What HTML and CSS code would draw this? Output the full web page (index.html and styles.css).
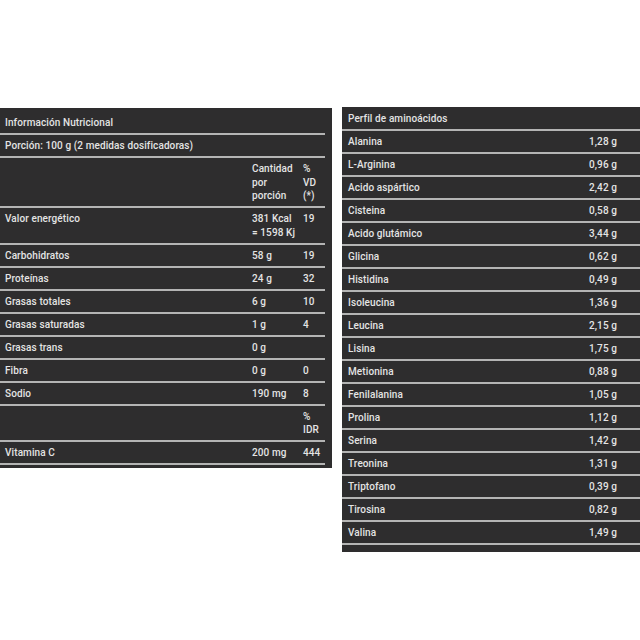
FILE: index.html
```html
<!DOCTYPE html>
<html lang="es">
<head>
<meta charset="utf-8">
<link rel="stylesheet" href="styles.css">
</head>
<body>
<div class="page">
  <section class="panel panel-left">
    <div class="table">
      <div class="row full">Información Nutricional</div>
      <div class="row full">Porción: 100 g (2 medidas dosificadoras)</div>
      <div class="row n3"><span></span><span>Cantidad<br>por<br>porción</span><span>%<br>VD<br>(*)</span></div>
      <div class="row n3"><span>Valor energético</span><span>381 Kcal<br>= 1598 Kj</span><span>19</span></div>
      <div class="row n3"><span>Carbohidratos</span><span>58 g</span><span>19</span></div>
      <div class="row n3"><span>Proteínas</span><span>24 g</span><span>32</span></div>
      <div class="row n3"><span>Grasas totales</span><span>6 g</span><span>10</span></div>
      <div class="row n3"><span>Grasas saturadas</span><span>1 g</span><span>4</span></div>
      <div class="row n3"><span>Grasas trans</span><span>0 g</span><span></span></div>
      <div class="row n3"><span>Fibra</span><span>0 g</span><span>0</span></div>
      <div class="row n3"><span>Sodio</span><span>190 mg</span><span>8</span></div>
      <div class="row n3"><span></span><span></span><span>%<br>IDR</span></div>
      <div class="row n3"><span>Vitamina C</span><span>200 mg</span><span>444</span></div>
    </div>
  </section>
  <section class="panel panel-right">
    <div class="row full">Perfil de aminoácidos</div>
    <div class="row n2"><span>Alanina</span><span>1,28 g</span></div>
    <div class="row n2"><span>L-Arginina</span><span>0,96 g</span></div>
    <div class="row n2"><span>Acido aspártico</span><span>2,42 g</span></div>
    <div class="row n2"><span>Cisteina</span><span>0,58 g</span></div>
    <div class="row n2"><span>Acido glutámico</span><span>3,44 g</span></div>
    <div class="row n2"><span>Glicina</span><span>0,62 g</span></div>
    <div class="row n2"><span>Histidina</span><span>0,49 g</span></div>
    <div class="row n2"><span>Isoleucina</span><span>1,36 g</span></div>
    <div class="row n2"><span>Leucina</span><span>2,15 g</span></div>
    <div class="row n2"><span>Lisina</span><span>1,75 g</span></div>
    <div class="row n2"><span>Metionina</span><span>0,88 g</span></div>
    <div class="row n2"><span>Fenilalanina</span><span>1,05 g</span></div>
    <div class="row n2"><span>Prolina</span><span>1,12 g</span></div>
    <div class="row n2"><span>Serina</span><span>1,42 g</span></div>
    <div class="row n2"><span>Treonina</span><span>1,31 g</span></div>
    <div class="row n2"><span>Triptofano</span><span>0,39 g</span></div>
    <div class="row n2"><span>Tirosina</span><span>0,82 g</span></div>
    <div class="row n2"><span>Valina</span><span>1,49 g</span></div>
  </section>
</div>
</body>
</html>
```
FILE: styles.css
```css
html, body {
  margin: 0;
  padding: 0;
  background: #ffffff;
}
body {
  font-family: Roboto, "Liberation Sans", sans-serif;
  font-size: 10px;
  font-weight: 500;
  color: #e4e4e4;
  letter-spacing: 0.1px;
}
.page {
  display: flex;
  align-items: flex-start;
  gap: 10px;
  width: 640px;
  overflow: hidden;
}
.panel {
  background: #2e2d2e;
}
.panel-left {
  margin-top: 108px;
  width: 332px;
  flex: none;
  padding: 4px 0 3px 0;
  box-sizing: border-box;
}
.panel-left .table {
  width: 325px;
}
.panel-right {
  margin-top: 107px;
  width: 298px;
  flex: none;
  padding: 1px 0 7px 0;
}
.row {
  border-bottom: 2px solid #b4b4b4;
  line-height: 13.5px;
  padding: 4px 0 3.5px 5px;
}
.row.n3 {
  display: grid;
  grid-template-columns: 247px 51px 1fr;
}
.panel-right .row {
  padding-left: 6px;
}
.row.n2 {
  display: grid;
  grid-template-columns: 241px 1fr;
}
```
